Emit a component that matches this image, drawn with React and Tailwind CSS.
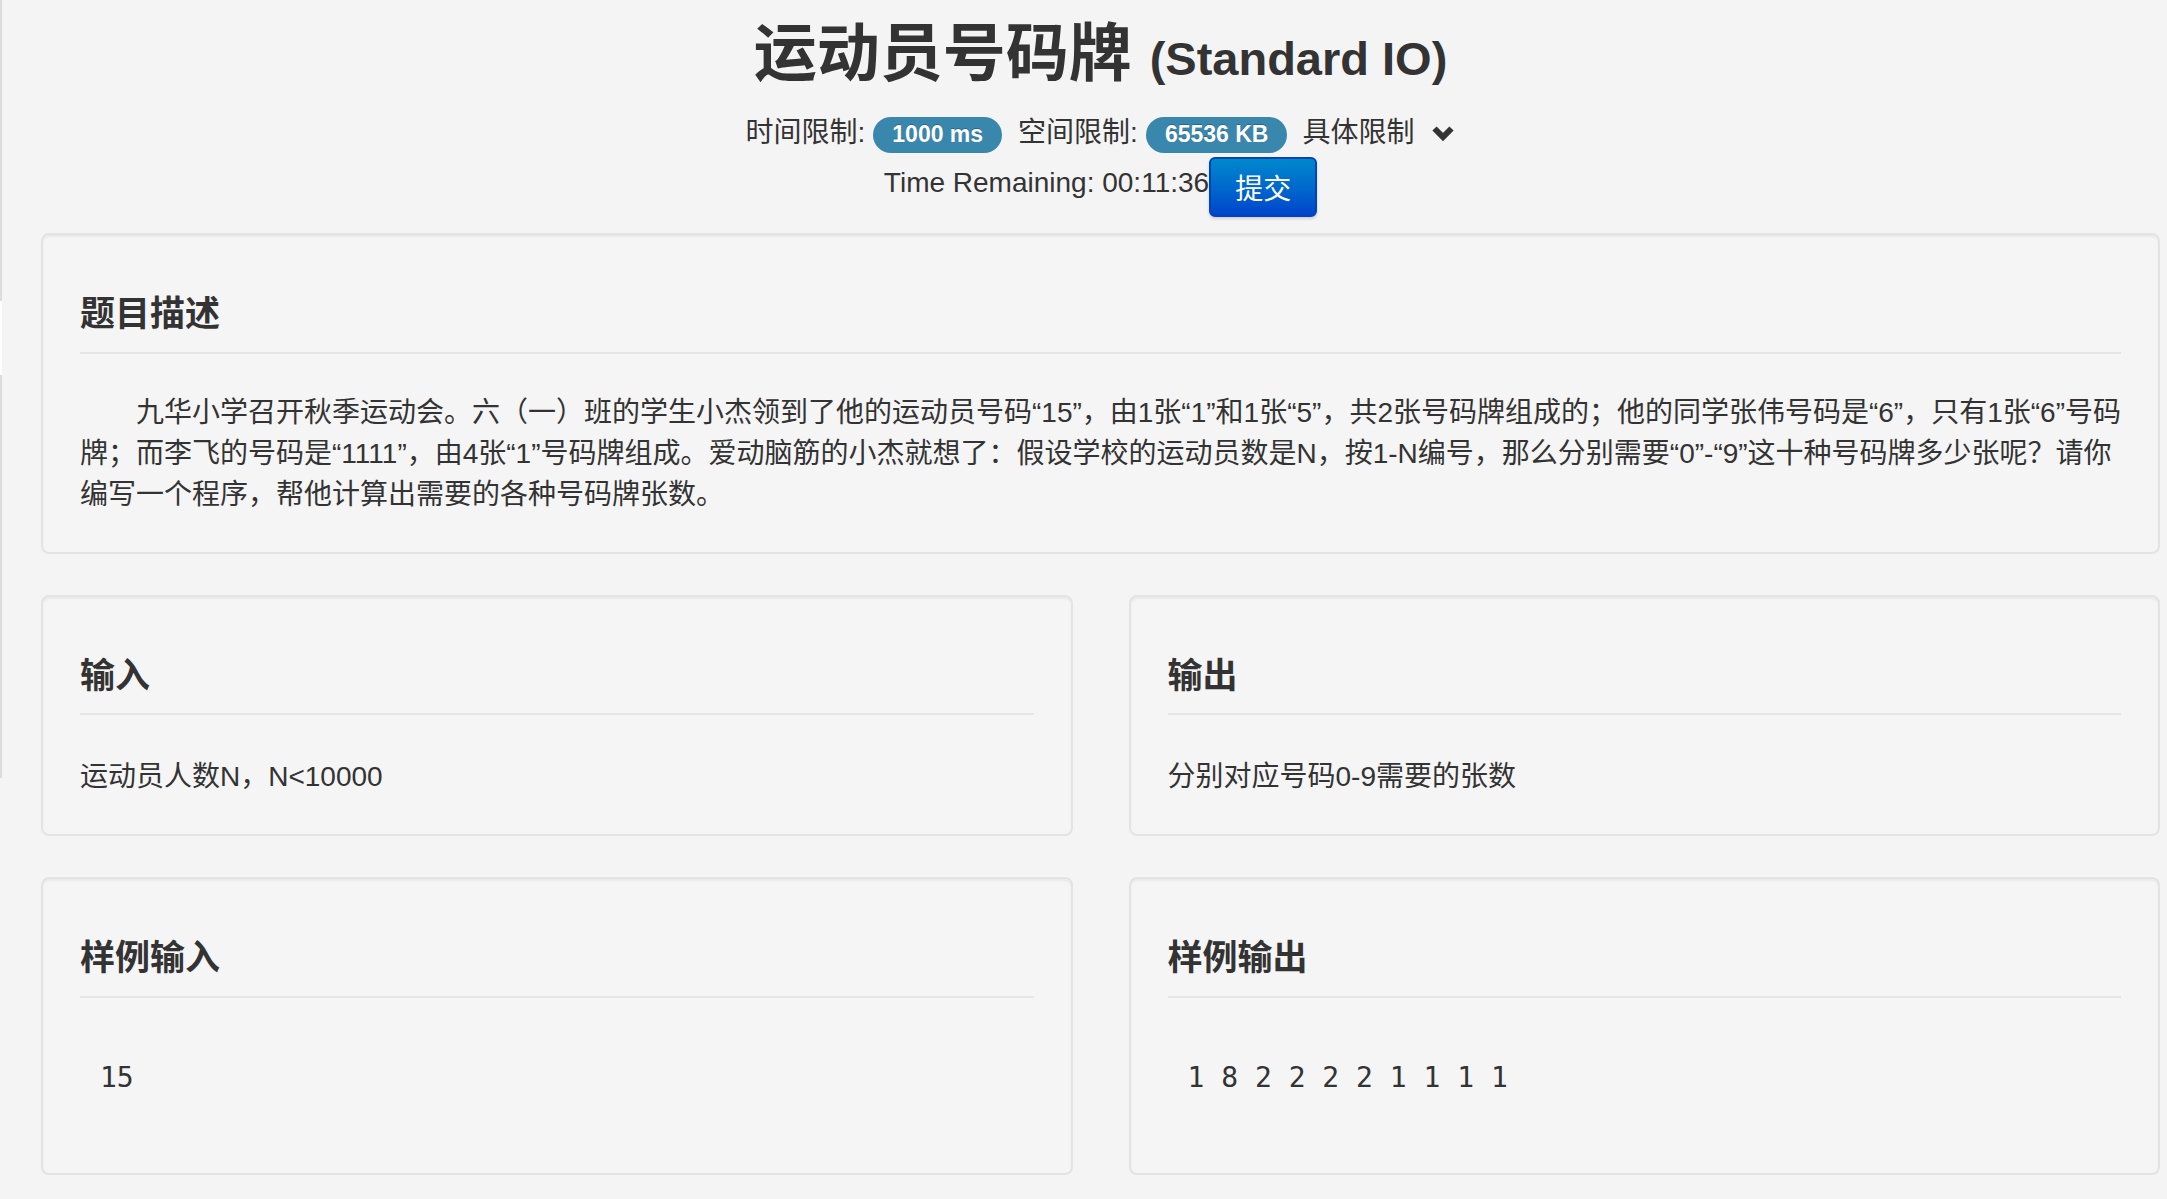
/**
 * Problem page - 运动员号码牌 (Standard IO)
 * Header with limits + timer, description well, IO wells and samples.
 */

const SANS = "font-['Liberation_Sans','Noto_Sans_CJK_SC',sans-serif]";

function Badge({ children }) {
  return (
    <span className="inline-flex items-center h-[36px] px-[19px] rounded-full bg-[#3a87ad] text-white text-[23px] font-bold leading-none [text-shadow:0_-1px_0_rgba(0,0,0,0.25)]">
      {children}
    </span>
  );
}

function ChevronDown() {
  return (
    <svg width="24" height="17" viewBox="0 0 24 17" className="text-[#333]">
      <path d="M3.5 3.5 L12 12 L20.5 3.5" fill="none" stroke="currentColor" strokeWidth="6" strokeLinejoin="miter" />
    </svg>
  );
}

function Well({ title, children }) {
  return (
    <div className="rounded-[8px] border-2 border-[#e3e3e3] bg-[#f5f5f5] shadow-[inset_0_2px_2px_rgba(0,0,0,0.05)] px-[37px] pt-[60px] pb-[37px]">
      <h4 className="text-[35px] leading-[38.5px] font-bold pb-[18px] border-b-2 border-[#e5e5e5]">{title}</h4>
      {children}
    </div>
  );
}

function Sample({ children }) {
  return (
    <pre className="mt-[41px] mb-[19px] pl-[20px] py-[19px] font-['DejaVu_Sans_Mono',monospace] text-[28px] leading-[40px] text-[#333]">
      {children}
    </pre>
  );
}

export default function App() {
  return (
    <div className={`relative min-h-screen bg-[#f4f4f4] text-[#333] ${SANS}`}>
      {/* left edge of sidebar */}
      <div className="absolute left-0 top-0 w-[2px] h-[778px] bg-[#dcdcdc]" />
      <div className="absolute left-0 top-[301px] w-[2px] h-[74px] bg-white" />

      <div className="pl-[41px] pr-[7px] pb-[40px]">
        {/* Header */}
        <div className="flex justify-center items-baseline pt-[22px] leading-none">
          <h1 className="text-[63px] font-bold">运动员号码牌</h1>
          <small className="ml-[18px] text-[47px] font-bold">(Standard IO)</small>
        </div>

        <div className="flex justify-center items-center h-[36px] mt-[30px] text-[28px]">
          <span>时间限制:</span>
          <span className="ml-[8px]"><Badge>1000 ms</Badge></span>
          <span className="ml-[16px]">空间限制:</span>
          <span className="ml-[8px]"><Badge>65536 KB</Badge></span>
          <span className="ml-[15px]">具体限制</span>
          <span className="ml-[17px] flex items-center"><ChevronDown /></span>
        </div>

        <div className="flex justify-center items-center mt-[6px] text-[28px]">
          <span className="leading-[40px] mb-[9px]">Time Remaining: 00:11:36</span>
          <button className="h-[60px] px-[24px] pt-[5px] rounded-[6px] border-2 border-[#0044bb] bg-gradient-to-b from-[#0088cc] to-[#0044cc] text-white text-[28px] leading-none shadow-[0_2px_3px_rgba(0,0,0,0.15)]">
            提交
          </button>
        </div>

        {/* Description */}
        <div className="mt-[16px]">
          <Well title="题目描述">
            <p className="mt-[38px] text-[28px] leading-[41px] whitespace-nowrap">
              <span className="pl-[56px]">九华小学召开秋季运动会。六（一）班的学生小杰领到了他的运动员号码“15”，由1张“1”和1张“5”，共2张号码牌组成的；他的同学张伟号码是“6”，只有1张“6”号码</span>
              <br />
              牌；而李飞的号码是“1111”，由4张“1”号码牌组成。爱动脑筋的小杰就想了：假设学校的运动员数是N，按1-N编号，那么分别需要“0”-“9”这十种号码牌多少张呢？请你
              <br />
              编写一个程序，帮他计算出需要的各种号码牌张数。
            </p>
          </Well>
        </div>

        {/* IO */}
        <div className="grid grid-cols-2 gap-x-[56px] gap-y-[41px] mt-[41px]">
          <Well title="输入">
            <p className="mt-[41px] text-[28px] leading-[41px]">运动员人数N，N&lt;10000</p>
          </Well>
          <Well title="输出">
            <p className="mt-[41px] text-[28px] leading-[41px]">分别对应号码0-9需要的张数</p>
          </Well>
          <Well title="样例输入">
            <Sample>15</Sample>
          </Well>
          <Well title="样例输出">
            <Sample>1 8 2 2 2 2 1 1 1 1</Sample>
          </Well>
        </div>
      </div>
    </div>
  );
}
